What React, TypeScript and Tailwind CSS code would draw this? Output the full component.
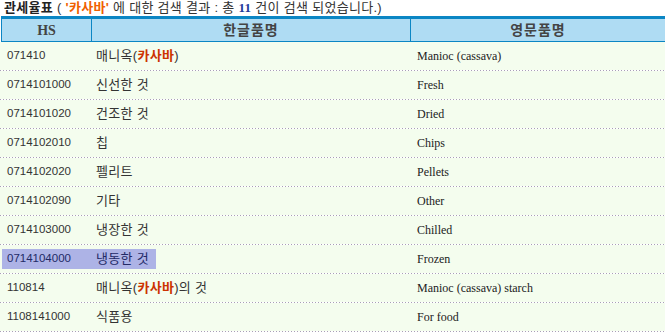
const rows = [
  { hs: "071410", ko: ["매니옥(", "카사바", ")"], en: "Manioc (cassava)" },
  { hs: "0714101000", ko: ["신선한 것"], en: "Fresh" },
  { hs: "0714101020", ko: ["건조한 것"], en: "Dried" },
  { hs: "0714102010", ko: ["칩"], en: "Chips" },
  { hs: "0714102020", ko: ["펠리트"], en: "Pellets" },
  { hs: "0714102090", ko: ["기타"], en: "Other" },
  { hs: "0714103000", ko: ["냉장한 것"], en: "Chilled" },
  { hs: "0714104000", ko: ["냉동한 것"], en: "Frozen", selected: true },
  { hs: "110814", ko: ["매니옥(", "카사바", ")의 것"], en: "Manioc (cassava) starch" },
  { hs: "1108141000", ko: ["식품용"], en: "For food" },
]

const sans = "font-['Liberation_Sans','Noto_Sans_CJK_KR',sans-serif]"

const Row = ({ row }: { row: (typeof rows)[number] }) => (
  <div>
    <div className="h-[28px] grid grid-cols-[410px_1fr] items-center bg-[#f4fdee] whitespace-nowrap">
      <div className="flex h-full items-center pl-[2px]">
        <div
          className={`flex h-[20px] items-center ${row.selected ? "w-[154px] bg-[#adb3e6] text-[#222a66]" : "text-[#333]"}`}
        >
          <span className="w-[94px] shrink-0 pl-[5px] text-[11.5px]">{row.hs}</span>
          <span className="text-[13px] tracking-[0.3px]">
            {row.ko.map((part, i) =>
              part === "카사바" ? (
                <b key={i} className="text-[#cc3300]">
                  {part}
                </b>
              ) : (
                <span key={i}>{part}</span>
              ),
            )}
          </span>
        </div>
      </div>
      <div className="pl-[7px] font-['Liberation_Serif',serif] text-[12px] text-[#222]">{row.en}</div>
    </div>
    <div className="h-px bg-[linear-gradient(to_right,#a89fb6_1px,transparent_1px)] bg-[length:3px_1px]" />
  </div>
)

export default function App() {
  return (
    <div className={`w-[665px] h-[333px] overflow-hidden bg-white ${sans}`}>
      <div className="h-[16px] pl-[4px] text-[13px] leading-[15px] tracking-[0.3px] text-[#333] whitespace-nowrap">
        <b className="text-[#222]">관세율표</b> ( <b className="text-[#f06000]">'카사바'</b> 에 대한 검색 결과 : 총{" "}
        <b className="font-['Liberation_Serif',serif] text-[#1f3a9a]">11</b> 건이 검색 되었습니다.)
      </div>
      <div className="ml-[1px] grid h-[26px] grid-cols-[90px_319px_1fr] border-t-[3px] border-b border-l border-[#0b86c4] bg-[#afdcf3] text-[14px] font-bold text-[#444]">
        <div className="flex items-center justify-center border-r border-[#0b86c4] font-['Liberation_Serif',serif]">HS</div>
        <div className="flex items-center justify-center border-r border-[#0b86c4] tracking-[1px]">한글품명</div>
        <div className="flex items-center justify-center tracking-[1px]">영문품명</div>
      </div>
      {rows.map((row) => (
        <Row key={row.hs} row={row} />
      ))}
    </div>
  )
}
